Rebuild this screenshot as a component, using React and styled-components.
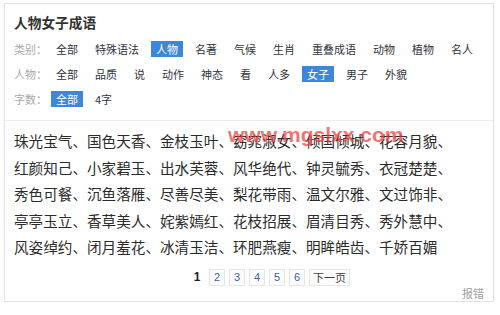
import React from "react";
import styled, { createGlobalStyle } from "styled-components";

const GlobalStyle = createGlobalStyle`
  html, body {
    margin: 0;
    padding: 0;
    background: #ffffff;
  }
  body {
    font-family: "Noto Sans CJK SC", "Liberation Sans", sans-serif;
    color: #333;
  }
`;

const filters = [
  {
    label: "类别：",
    items: ["全部", "特殊语法", "人物", "名著", "气候", "生肖", "重叠成语", "动物", "植物", "名人"],
    active: "人物",
  },
  {
    label: "人物：",
    items: ["全部", "品质", "说", "动作", "神态", "看", "人多", "女子", "男子", "外貌"],
    active: "女子",
  },
  {
    label: "字数：",
    items: ["全部", "4字"],
    active: "全部",
  },
];

const idioms = [
  "珠光宝气", "国色天香", "金枝玉叶", "窈窕淑女", "倾国倾城", "花容月貌",
  "红颜知己", "小家碧玉", "出水芙蓉", "风华绝代", "钟灵毓秀", "衣冠楚楚",
  "秀色可餐", "沉鱼落雁", "尽善尽美", "梨花带雨", "温文尔雅", "文过饰非",
  "亭亭玉立", "香草美人", "姹紫嫣红", "花枝招展", "眉清目秀", "秀外慧中",
  "风姿绰约", "闭月羞花", "冰清玉洁", "环肥燕瘦", "明眸皓齿", "千娇百媚",
];

const pages = ["2", "3", "4", "5", "6"];

export default function App() {
  return (
    <>
      <GlobalStyle />
      <Card>
        <Header>
          <Title>人物女子成语</Title>
          <FilterList>
            {filters.map((f) => (
              <FilterRow key={f.label}>
                <Label>{f.label}</Label>
                {f.items.map((item) => (
                  <Tag key={item} $active={item === f.active}>
                    {item}
                  </Tag>
                ))}
              </FilterRow>
            ))}
          </FilterList>
        </Header>

        <Body>
          <Watermark>www.mgslxx.com</Watermark>
          <IdiomList>
            {idioms.map((word, i) => (
              <Idiom key={word}>
                {word}
                {i < idioms.length - 1 ? "、" : ""}
              </Idiom>
            ))}
          </IdiomList>

          <Pager>
            <Current>1</Current>
            {pages.map((p) => (
              <PageLink key={p}>{p}</PageLink>
            ))}
            <PageLink $wide>下一页</PageLink>
          </Pager>

          <Footer>
            <Report>报错</Report>
          </Footer>
        </Body>
      </Card>
    </>
  );
}

const Card = styled.div`
  box-sizing: border-box;
  width: 490px;
  margin: 3px 0 0 4px;
  border: 1px solid #e2e2e2;
  box-shadow: 0 1px 2px rgba(0, 0, 0, 0.06);
  background: #fff;
  padding: 8px 0 1px;
`;

const Header = styled.div`
  padding: 0 9px 13px;
  border-bottom: 1px solid #ededed;
`;

const Title = styled.h2`
  margin: 0;
  font-size: 13.7px;
  line-height: 20px;
  font-weight: 700;
  color: #333;
`;

const FilterList = styled.div`
  display: flex;
  flex-direction: column;
  gap: 9px;
  margin-top: 9px;
`;

const FilterRow = styled.div`
  display: flex;
  align-items: center;
  gap: 7px;
  height: 16px;
  font-size: 11px;
  line-height: 16px;
  white-space: nowrap;
`;

const Label = styled.span`
  width: 30px;
  flex: none;
  color: #a8a8a8;
`;

const Tag = styled.span`
  flex: none;
  padding: 0 5px;
  height: 16px;
  color: ${(p) => (p.$active ? "#fff" : "#2f3440")};
  background: ${(p) => (p.$active ? "#3d87d8" : "transparent")};
`;

const Body = styled.div`
  position: relative;
  padding: 7px 9px 0;
`;

const Watermark = styled.div`
  position: absolute;
  left: 223px;
  top: 1px;
  font-family: "Liberation Sans", Arial, sans-serif;
  font-size: 21px;
  line-height: 26px;
  font-weight: 700;
  color: rgba(236, 60, 60, 0.72);
  pointer-events: none;
`;

const IdiomList = styled.div`
  font-size: 14.6px;
  line-height: 26.5px;
  color: #2b2b2b;
`;

const Idiom = styled.span`
  display: inline-block;
  white-space: nowrap;
`;

const Pager = styled.div`
  display: flex;
  align-items: center;
  gap: 4px;
  margin-top: 8px;
  padding-left: 175px;
  font-family: "Liberation Sans", "Noto Sans CJK SC", sans-serif;
  font-size: 11px;
`;

const Current = styled.span`
  width: 16px;
  text-align: center;
  font-weight: 700;
  font-size: 12px;
  color: #222;
`;

const PageLink = styled.span`
  box-sizing: border-box;
  min-width: 16px;
  height: 17px;
  padding: 0 ${(p) => (p.$wide ? "3px" : "0")};
  border: 1px solid #e6e6e6;
  background: #fcfcfc;
  display: flex;
  align-items: center;
  justify-content: center;
  color: ${(p) => (p.$wide ? "#444" : "#3d5fa8")};
  font-family: ${(p) => (p.$wide ? '"Noto Sans CJK SC", sans-serif' : '"Liberation Sans", sans-serif')};
`;

const Footer = styled.div`
  display: flex;
  justify-content: flex-end;
`;

const Report = styled.span`
  font-size: 11px;
  line-height: 14px;
  color: #a0a0a0;
`;
